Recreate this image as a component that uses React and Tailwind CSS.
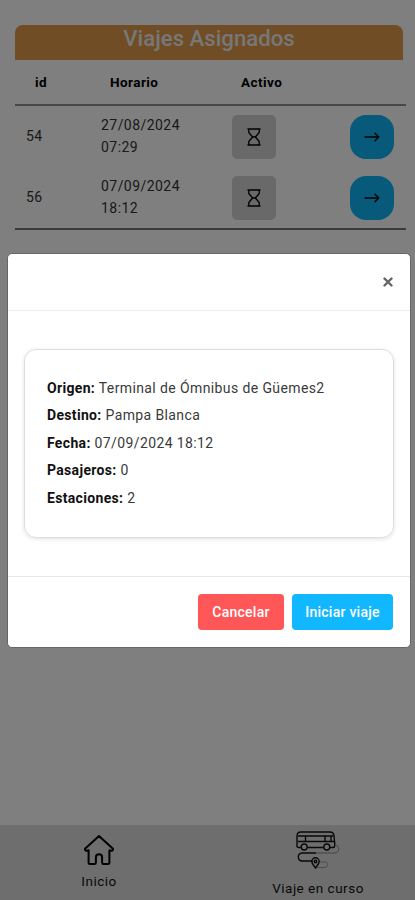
import { X } from "lucide-react";

const trips = [
  { id: 54, date: "27/08/2024", time: "07:29" },
  { id: 56, date: "07/09/2024", time: "18:12" }
];

const details = [
  { label: "Origen:", value: "Terminal de Ómnibus de Güemes2" },
  { label: "Destino:", value: "Pampa Blanca" },
  { label: "Fecha:", value: "07/09/2024 18:12" },
  { label: "Pasajeros:", value: "0" },
  { label: "Estaciones:", value: "2" }
];

const HourglassIcon = () => (
  <svg viewBox="0 0 14 18" className="h-[18px] w-[14px]" fill="none" stroke="#000" strokeWidth="1.300">
    <path d="M.5 1h13M.5 17h13" strokeWidth="1.500" />
    <path d="M1.800 1v3.500L5.600 9l-3.800 4.500V17M12.200 1v3.500L8.400 9l3.800 4.500V17" strokeLinejoin="round" />
    <path d="M5.500 8.500h3L7 9.800Z" fill="#000" strokeWidth=".5" />
  </svg>
);

const ArrowIcon = () => (
  <svg viewBox="0 0 16 10" className="h-[10px] w-4" fill="none" stroke="#000" strokeWidth="1.300" strokeLinecap="round" strokeLinejoin="round">
    <path d="M1 5h13.800M11 1.200 14.800 5 11 8.800" />
  </svg>
);

const HomeIcon = () => (
  <svg viewBox="0 0 30 30" className="h-[30px] w-[30px]" fill="none" stroke="#000" strokeWidth="2" strokeLinecap="round" strokeLinejoin="round">
    <path d="M15 1 1.300 13.400c-.7.9 0 2.600 1.500 2.300l1.800-.4v12.200c0 .8.6 1.500 1.500 1.500h4.400c.8 0 1.400-.7 1.400-1.500v-5.300c0-4 6.200-4 6.200 0v5.300c0 .8.6 1.500 1.400 1.500h4.400c.9 0 1.500-.7 1.500-1.500V15.300l1.800.4c1.500.3 2.200-1.400 1.500-2.300Z" />
  </svg>
);

const BusRouteIcon = () => (
  <svg viewBox="0 0 44 38" className="h-[38px] w-[44px]" fill="none" stroke="#111" strokeWidth="1.400">
    <path d="M5 16.500H2.500c-1 0-1.500-.5-1.500-1.500V5c0-2.500 1.500-4 4-4h29c2.500 0 3.700 1.200 4 4l.7 7v3c0 1-.5 1.500-1.500 1.500H34M11.500 16.500h16" />
    <path d="M2 5h35.500M2 10.500h36M9.500 5v5.500M29 5v5.500M35 5v5.500" />
    <circle cx="8.200" cy="16" r="3" />
    <circle cx="30.800" cy="16" r="3" />
    <path d="M40 14c4 1.500 3.500 8-1.500 8H20" strokeWidth="1" opacity=".4" />
    <path d="M20 22H6c-5 0-5 8 .5 8h10" />
    <path d="M23 31h6c4 0 3 5.500 0 5.500h-9" strokeWidth=".9" opacity=".35" />
    <path d="M19.500 37c-2-3-3.700-4.500-3.700-6.500a3.700 3.700 0 0 1 7.400 0c0 2-1.700 3.500-3.700 6.500Z" />
    <circle cx="19.500" cy="30.500" r="1.300" />
  </svg>
);

const TripsTable = () => (
  <section className="ml-[15px] w-[391px] pt-[25px]">
    <h1 className="h-[35px] w-[388px] rounded-t-[8px] bg-[#e09a4a] text-center text-[22.200px] leading-[27px] font-medium text-[#eee]">
      Viajes Asignados
    </h1>
    <div className="flex h-[46px] items-center border-b-2 border-[#909090] text-[13.500px] font-bold tracking-[0.450px]">
      <span className="w-[95px] pl-5">id</span>
      <span className="w-[131px]">Horario</span>
      <span>Activo</span>
    </div>
    <div className="border-b-2 border-[#777]">
      {trips.map((trip) => (
        <div key={trip.id} className="flex h-[61px] items-center text-[14px] leading-[22px] tracking-[0.450px] text-[#333]">
          <span className="w-[86px] pb-[2px] pl-[11px]">{trip.id}</span>
          <span className="w-[131px] pb-px">
            {trip.date}
            <br />
            {trip.time}
          </span>
          <span className="flex h-11 w-11 items-center justify-center rounded-[5px] bg-[#d2d2d2]">
            <HourglassIcon />
          </span>
          <button type="button" className="ml-[74px] flex h-11 w-11 items-center justify-center rounded-[16px] bg-[#10b4f5]">
            <ArrowIcon />
          </button>
        </div>
      ))}
    </div>
  </section>
);

const BottomNav = () => (
  <nav className="flex h-[75px] bg-[#dcdcdc] text-[13.500px] leading-4 tracking-[0.500px] text-[#111]">
    <div className="flex w-[198px] flex-col items-center pt-[10px]">
      <HomeIcon />
      <span className="mt-2">Inicio</span>
    </div>
    <div className="ml-[23px] flex w-[194px] flex-col items-center pt-[6px]">
      <BusRouteIcon />
      <span className="mt-[11px]">Viaje en curso</span>
    </div>
  </nav>
);

const TripModal = () => (
  <div className="absolute inset-0 bg-black/50 pt-[253px] pl-[7px]">
    <div className="flex h-[395px] w-[404px] flex-col rounded-[5px] border border-[#666] bg-white">
      <div className="flex h-[57px] items-center justify-end border-b border-[#ececec] pr-[15px]">
        <button type="button" aria-label="Cerrar">
          <X className="h-[14px] w-[14px] text-[#666]" strokeWidth={4.2} />
        </button>
      </div>
      <div className="h-[265px] px-4 pt-[38px]">
        <div className="h-[189px] rounded-[12px] border border-[#ddd] pt-[24.500px] pl-[22px] shadow-[0_1px_4px_rgba(0,0,0,0.12)]">
          {details.map((detail) => (
            <p key={detail.label} className="text-[14px] leading-[27.600px] tracking-[0.390px] text-[#3a3a3a]">
              <strong className="font-bold tracking-[0.330px] text-[#111]">{detail.label}</strong> {detail.value}
            </p>
          ))}
        </div>
      </div>
      <div className="flex flex-1 justify-end gap-2 border-t border-[#e8e8e8] pt-[17px] pr-[17px] text-[14px] font-medium tracking-[0.250px] text-white">
        <button type="button" className="h-9 w-[86px] rounded-[4px] bg-[#ff5757]">
          Cancelar
        </button>
        <button type="button" className="h-9 w-[101px] rounded-[4px] bg-[#12b8ff]">
          Iniciar viaje
        </button>
      </div>
    </div>
  </div>
);

const App = () => (
  <div className="relative flex h-[900px] w-[415px] flex-col justify-between overflow-hidden bg-white font-['Roboto',sans-serif]">
    <TripsTable />
    <BottomNav />
    <TripModal />
  </div>
);

export default App;
